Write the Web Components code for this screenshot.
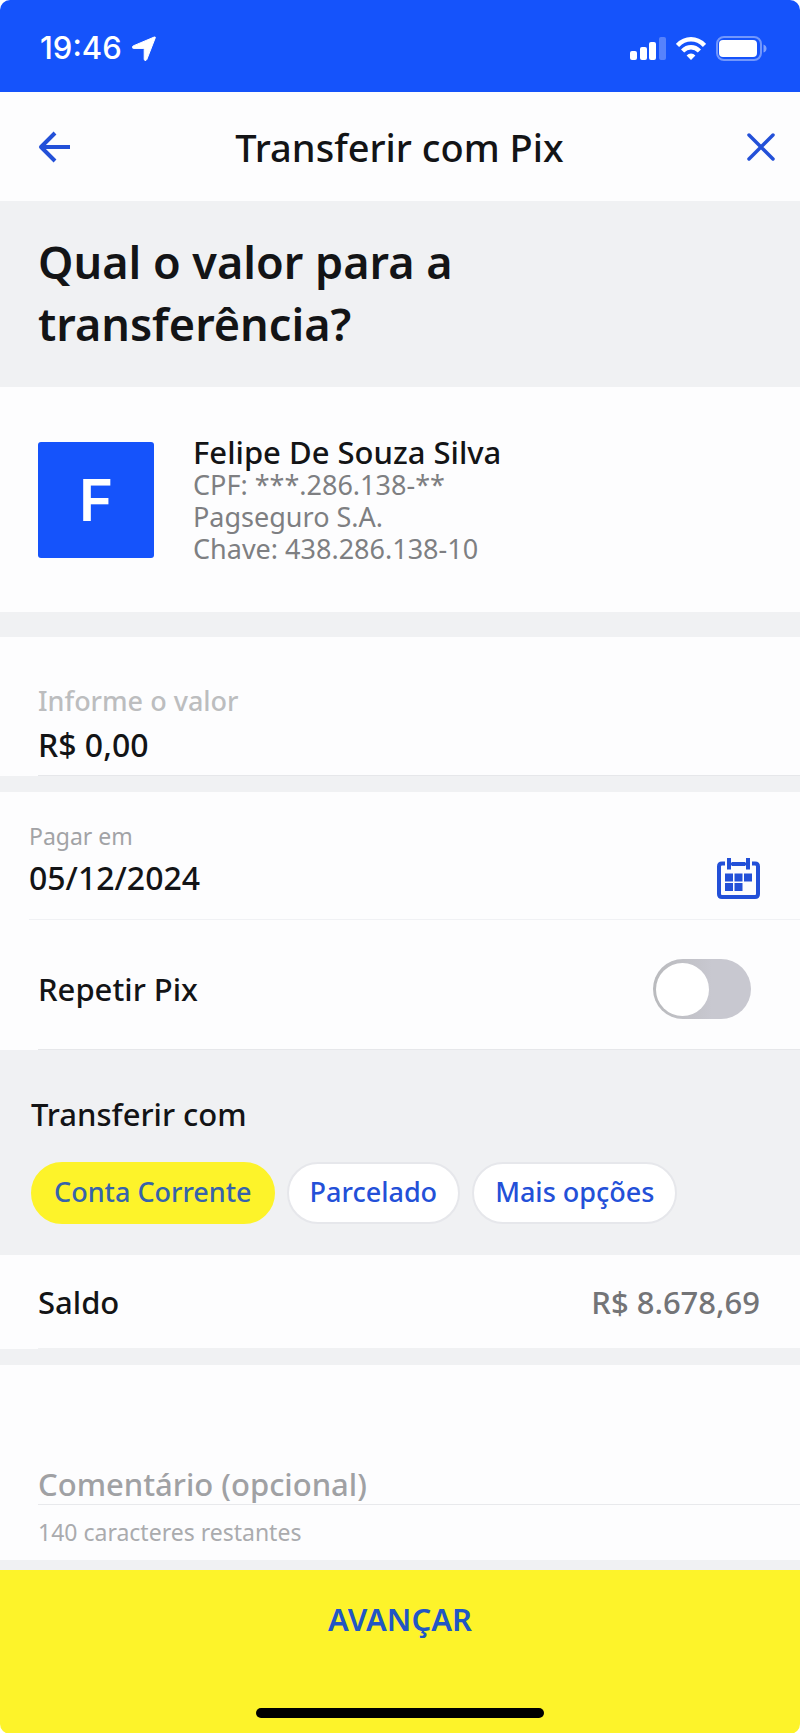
<!DOCTYPE html>
<html lang="pt-BR">
<head>
<meta charset="utf-8">
<meta name="viewport" content="width=device-width, initial-scale=1">
<title>Transferir com Pix</title>
<style>
  :root {
    --blue: #1553fb;
    --link: #2350d8;
    --yellow: #fdf32a;
    --surface: #fdfdfe;
    --gap: #f0f1f3;
    --line: #e6e7ea;
    --ink: #131416;
    --muted: #7e7f82;
  }
  body {
    margin: 0;
    background: #fff;
    color: var(--ink);
    font: 500 31px/40px "Noto Sans", "Open Sans", sans-serif;
  }
</style>
</head>
<body>
<pix-screen></pix-screen>
<script>
const define = (name, html, setup) => {
  const template = document.createElement('template');
  template.innerHTML = html;
  customElements.define(name, class extends HTMLElement {
    constructor() {
      super();
      this.attachShadow({ mode: 'open' }).append(template.content.cloneNode(true));
    }
    connectedCallback() {
      if (setup) setup(this, this.shadowRoot);
    }
  });
};

define('status-bar', `
<style>
  :host { display: flex; align-items: center; justify-content: space-between; height: 92px; padding: 4px 33px 0 40px; box-sizing: border-box; background: var(--blue); color: #fff; border-radius: 10px 10px 0 0; }
  .time, .signals { display: flex; align-items: center; }
  .time { gap: 10px; font: 500 31px/40px Inter, sans-serif; }
  .signals { gap: 10px; }
  svg { display: block; }
</style>
<div class="time"><span>19:46</span>
  <svg width="24" height="25" viewBox="0 0 24 25" fill="#fff" stroke="#fff" stroke-linejoin="round" aria-hidden="true"><path d="M22.300 1Q23.700 0.600 23.200 2L14.800 23.500Q14.200 24.800 12.900 24.500Q12.200 24.200 12.200 23V13.300Q12.200 12.400 11.300 12.400H1.500Q0.500 12.400 0.500 11.500Q0.300 10.300 1.200 9.900Z"/></svg>
</div>
<div class="signals">
  <svg width="36" height="23" viewBox="0 0 36 23" fill="#fff" aria-hidden="true"><rect y="14" width="7" height="9" rx="2"/><rect x="10" y="10" width="7" height="13" rx="2"/><rect x="19" y="5" width="7" height="18" rx="2"/><rect x="29" width="7" height="23" rx="2" opacity=".28"/></svg>
  <svg width="30" height="23" viewBox="0 0 30 23" fill="none" stroke="#fff" stroke-width="4.500" aria-hidden="true"><path d="M1.500 8.400Q7.500 2.300 15 2.300T28.500 8.400"/><path d="M6.600 14Q10.300 10.300 15 10.300T23.400 14"/><path d="M15 23L10.600 18.600Q12.500 16.600 15 16.600T19.400 18.600Z" fill="#fff" stroke="none"/></svg>
  <svg width="51" height="25" viewBox="0 0 51 25" aria-hidden="true"><rect x="1" y="1" width="44" height="23" rx="7" fill="none" stroke="#fff" stroke-width="2" opacity=".4"/><rect x="3" y="4" width="38" height="17" rx="4" fill="#fff"/><path d="M47.500 8.500Q50.500 9.500 50.500 12.500T47.500 16.500Z" fill="#fff" opacity=".45"/></svg>
</div>`);

define('top-bar', `
<style>
  :host { display: grid; grid-template-columns: 32px 1fr 32px; align-items: center; height: 109px; padding: 0 23px 0 38px; box-sizing: border-box; background: var(--surface); }
  h1 { margin: 0 0 0 -16px; text-align: center; font: inherit; font-size: 38px; line-height: 52px; }
  button { display: block; padding: 0; border: 0; background: none; color: var(--link); cursor: pointer; }
  svg { display: block; fill: none; stroke: currentColor; stroke-width: 4; stroke-linejoin: round; }
</style>
<button type="button" aria-label="Voltar"><svg width="32" height="32" viewBox="0 0 32 32"><path d="M32 16H3M17 2L3 16L17 30"/></svg></button>
<h1><slot></slot></h1>
<button type="button" aria-label="Fechar"><svg width="32" height="32" viewBox="0 0 32 32"><path d="M4 4L28 28M28 4L4 28" stroke-linecap="round" stroke-width="3.500"/></svg></button>`);

define('page-question', `
<style>
  :host { display: block; padding: 30px 38px 32px; background: var(--gap); }
  h2 { margin: 0; max-width: 480px; font: inherit; font-size: 45px; font-weight: 600; line-height: 62px; }
</style>
<h2><slot></slot></h2>`);

define('recipient-card', `
<style>
  :host { display: flex; align-items: flex-start; gap: 39px; padding: 48px 38px 47px; background: var(--surface); line-height: 32px; }
  .avatar { display: grid; place-items: center; width: 116px; height: 116px; margin-top: 7px; border-radius: 3px; background: var(--blue); color: #fff; font: 600 58px/60px Inter, sans-serif; }
  .details { color: var(--muted); font-size: 27px; font-weight: 400; }
  .name { color: var(--ink); font-size: 31px; font-weight: 500; line-height: 34px; }
</style>
<div class="avatar"><slot name="initial"></slot></div>
<div class="details"><div class="name"><slot name="name"></slot></div><slot></slot></div>`);

define('amount-field', `
<style>
  :host { display: block; padding-left: 38px; background: var(--surface); }
  .field { display: grid; gap: 6px; padding: 46px 0 10px; border-bottom: 1px solid var(--line); }
  label { color: #bcbdbf; font-size: 27px; line-height: 36px; }
  input { width: 100%; height: 40px; padding: 0; border: 0; outline: 0; background: none; color: inherit; font: inherit; font-size: 32px; }
</style>
<div class="field"><label for="amount">Informe o valor</label><input id="amount" type="text" inputmode="decimal" value="R$ 0,00"></div>`);

define('date-field', `
<style>
  :host { display: block; padding-left: 29px; background: var(--surface); }
  .field { display: grid; gap: 6px; padding: 28px 40px 21px 0; border-bottom: 1px solid #f0f1f4; }
  label { color: #a2a3a6; font-size: 23px; font-weight: 400; line-height: 32px; }
  .row { display: flex; align-items: center; justify-content: space-between; height: 40px; }
  input { flex: 1; min-width: 0; height: 40px; padding: 0; border: 0; outline: 0; background: none; color: inherit; font: inherit; font-size: 32px; }
  button { padding: 0; border: 0; background: none; color: var(--link); cursor: pointer; }
  svg { display: block; }
</style>
<div class="field">
  <label for="date">Pagar em</label>
  <div class="row"><input id="date" type="text" value="05/12/2024">
    <button type="button" aria-label="Abrir calendário"><svg width="43" height="41" viewBox="0 0 43 41" fill="none" stroke="currentColor" aria-hidden="true"><path d="M8 5.500H5Q2 5.500 2 8.500V36Q2 39 5 39H38Q41 39 41 36V8.500Q41 5.500 38 5.500H35M15 6H28" stroke-width="4"/><path d="M12 0V11.500M31 0V11.500" stroke-width="4"/><path d="M12 6H16M27 6H31" stroke-width="3"/><path d="M8 15.500h8v8h-8zM17.500 15.500h8v8h-8zM27 15.500h8v8h-8zM8 25h8v8h-8zM17.500 25h8v8h-8z" fill="currentColor" stroke="none"/></svg></button>
  </div>
</div>`);

define('repeat-toggle', `
<style>
  :host { display: block; padding-left: 38px; background: var(--surface); }
  .row { display: flex; align-items: center; justify-content: space-between; padding: 39px 49px 30px 0; border-bottom: 1px solid var(--line); }
  input { appearance: none; display: flex; align-items: center; width: 98px; height: 60px; margin: 0; padding: 0 3px; box-sizing: border-box; border-radius: 30px; background: linear-gradient(90deg, #b9babd, #c8c8d0 60%); cursor: pointer; }
  input::before { content: ""; width: 53px; height: 53px; border-radius: 50%; background: #fff; }
  input:checked { justify-content: flex-end; background: var(--blue); }
</style>
<div class="row"><label for="repeat">Repetir Pix</label><input id="repeat" type="checkbox" role="switch"></div>`);

define('option-chip', `
<style>
  :host { display: block; }
  button { display: block; height: 62px; padding: 0 21px 2px; border: 2px solid #e6e7eb; border-radius: 31px; background: #fff; color: var(--link); font: inherit; font-size: 27px; line-height: 36px; cursor: pointer; white-space: nowrap; }
  :host([selected]) button { border-color: var(--yellow); background: var(--yellow); color: #3763ab; }
</style>
<button type="button"><slot></slot></button>`,
  (host, root) => root.querySelector('button').setAttribute('aria-pressed', host.hasAttribute('selected')));

define('payment-source', `
<style>
  :host { display: block; padding: 44px 31px 31px; background: var(--gap); }
  h3 { margin: 0 0 28px; font: inherit; }
  .chips { display: flex; flex-wrap: wrap; gap: 12px; }
</style>
<h3>Transferir com</h3>
<div class="chips"><slot></slot></div>`);

define('balance-row', `
<style>
  :host { display: block; padding-left: 38px; background: var(--surface); }
  .row { display: flex; justify-content: space-between; padding: 27px 40px 26px 0; border-bottom: 1px solid var(--gap); }
  .value { color: #737477; }
</style>
<div class="row"><span><slot></slot></span><span class="value"><slot name="value"></slot></span></div>`);

define('comment-field', `
<style>
  :host { display: block; padding: 99px 0 12px 38px; background: var(--surface); }
  input { display: block; width: 100%; height: 41px; padding: 0; border: 0; border-bottom: 1px solid #e8e9ec; box-sizing: border-box; outline: 0; border-radius: 0; background: none; color: inherit; font: inherit; }
  input::placeholder { color: #a0a1a4; opacity: 1; }
  p { margin: 11px 0 0; color: #aaabae; font-size: 23px; font-weight: 400; line-height: 32px; }
</style>
<input type="text" maxlength="140" placeholder="Comentário (opcional)" aria-label="Comentário (opcional)" aria-describedby="left">
<p id="left">140 caracteres restantes</p>`);

define('submit-footer', `
<style>
  :host { display: block; padding-bottom: 16px; background: var(--yellow); border-radius: 0 0 10px 10px; }
  button { display: block; width: 100%; height: 97px; padding: 0; border: 0; background: none; color: #2156c4; font: inherit; font-weight: 600; cursor: pointer; }
  .home { width: 36%; height: 10px; margin: 41px auto 0; border-radius: 5px; background: #000; }
</style>
<button type="submit"><slot></slot></button>
<div class="home"></div>`);

define('pix-screen', `
<style>
  :host { display: block; }
  main { display: grid; grid-template-columns: minmax(0, 1fr); background: var(--gap); }
  recipient-card { margin-bottom: 25px; }
  amount-field, balance-row { margin-bottom: 16px; }
  comment-field { margin-bottom: 10px; }
</style>
<status-bar></status-bar>
<top-bar>Transferir com Pix</top-bar>
<main>
  <page-question>Qual o valor para a transferência?</page-question>
  <recipient-card>
    <span slot="initial">F</span><span slot="name">Felipe De Souza Silva</span>
    <div>CPF: ***.286.138-**</div><div>Pagseguro S.A.</div><div>Chave: 438.286.138-10</div>
  </recipient-card>
  <amount-field></amount-field>
  <date-field></date-field>
  <repeat-toggle></repeat-toggle>
  <payment-source>
    <option-chip selected>Conta Corrente</option-chip>
    <option-chip>Parcelado</option-chip>
    <option-chip>Mais opções</option-chip>
  </payment-source>
  <balance-row>Saldo<span slot="value">R$ 8.678,69</span></balance-row>
  <comment-field></comment-field>
</main>
<submit-footer>AVANÇAR</submit-footer>`);
</script>
</body>
</html>
